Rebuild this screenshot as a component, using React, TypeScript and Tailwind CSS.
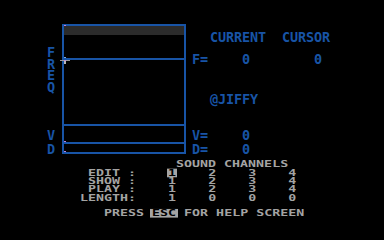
const blue = "text-[#1854a6]";

function Marker({ x, y }: { x: string; y: string }) {
  return <span className={`absolute ${x} ${y} w-[2px] h-[1px] bg-[#b87ee0]`} />;
}

function BlueText({ children, className = "" }: { children: React.ReactNode; className?: string }) {
  return (
    <div className={`h-[14px] leading-[14px] text-[13.5px] font-bold tracking-[-0.13px] whitespace-pre ${blue} ${className}`}>
      {children}
    </div>
  );
}

const rows = [
  { label: " EDIT :", vals: ["1", "2", "3", "4"] },
  { label: " SHOW :", vals: ["1", "2", "3", "4"] },
  { label: " PLAY :", vals: ["1", "2", "3", "4"] },
  { label: "LENGTH:", vals: ["1", "0", "0", "0"] },
];

export default function App() {
  return (
    <div
      className="relative w-[384px] h-[240px] overflow-hidden bg-black pt-[24px]"
      style={{ fontFamily: '"DejaVu Sans Mono", "Liberation Mono", monospace' }}
    >
      {/* graph area */}
      <div className="flex h-[130px]">
        <div className={`w-[62px] pl-[47px] flex flex-col text-[13.5px] font-bold ${blue}`}>
          <div className="mt-[23px] leading-[11.5px]">
            <div>F</div>
            <div>R</div>
            <div>E</div>
            <div>Q</div>
          </div>
          <div className="mt-[35px] h-[14px] leading-[14px]">V</div>
          <div className="h-[14px] leading-[14px]">D</div>
        </div>

        <div className="w-[124px] h-[130px] border-2 border-[#1854a6] flex flex-col">
          <div className="h-[9px] bg-[#2b2b2b]" />
          <div className="h-[23px]" />
          <div className="h-[66px] border-t-2 border-[#1854a6]" />
          <div className="h-[18px] border-t-2 border-[#1854a6]" />
          <div className="h-[10px] border-t-2 border-[#1854a6]" />
        </div>

        <div className="ml-[6px] flex flex-col">
          <BlueText className="mt-[6px] pl-[18px]">CURRENT  CURSOR</BlueText>
          <div className="mt-[8px] flex">
            <BlueText className="w-[50px]">F=</BlueText>
            <BlueText className="w-[72px]">0</BlueText>
            <BlueText>0</BlueText>
          </div>
          <BlueText className="mt-[26px] pl-[18px]">@JIFFY</BlueText>
          <div className="mt-[22px] flex">
            <BlueText className="w-[50px]">V=</BlueText>
            <BlueText>0</BlueText>
          </div>
          <div className="flex">
            <BlueText className="w-[50px]">D=</BlueText>
            <BlueText>0</BlueText>
          </div>
        </div>
      </div>

      {/* channel table, squashed vertically like the wide 8-bit glyphs */}
      <div className="mt-[6px] pl-[80px] origin-top-left scale-y-[0.72] text-[13.3px] font-bold leading-[11.8px] text-[#a4a4a4] whitespace-pre">
        <div>{"            SOUND CHANNELS"}</div>
        {rows.map((r, i) => (
          <div key={r.label}>
            {r.label}
            {r.vals.map((v, j) => (
              <span key={j}>
                {"    "}
                {i === 0 && j === 0 ? (
                  <span className="inline-block bg-[#a4a4a4] text-black px-[1px] -mx-[1px]">{v}</span>
                ) : (
                  v
                )}
              </span>
            ))}
          </div>
        ))}
        <div className="mt-[9px]">
          {"   PRESS "}
          <span className="inline-block bg-[#a4a4a4] text-black px-[2px] -mx-[2px]">ESC</span>
          {" FOR HELP SCREEN"}
        </div>
      </div>

      {/* cursor crosshair */}
      <svg className="absolute left-[59px] top-[56px]" width="12" height="9" viewBox="0 0 12 9">
        <rect x="5" y="1" width="2" height="1" fill="#7aa8e0" />
        <rect x="1" y="4" width="10" height="1" fill="#9a9a9a" />
        <rect x="5" y="4" width="2" height="1" fill="#c08ae0" />
        <rect x="5" y="5" width="2" height="3" fill="#b8b8b8" />
      </svg>
      <Marker x="left-[64px]" y="top-[25px]" />
      <Marker x="left-[64px]" y="top-[141px]" />
      <Marker x="left-[64px]" y="top-[151px]" />
    </div>
  );
}
